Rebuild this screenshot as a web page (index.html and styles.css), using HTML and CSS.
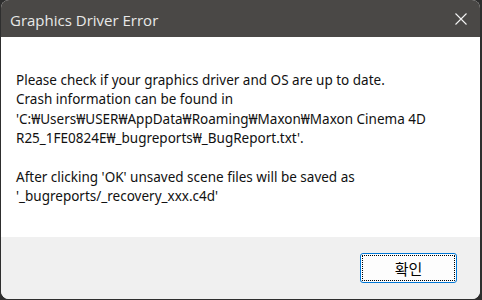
FILE: index.html
```html
<!DOCTYPE html>
<html lang="ko">
<head>
    <meta charset="UTF-8">
    <meta name="viewport" content="width=device-width, initial-scale=1.0">
    <title>Graphics Driver Error</title>
    <link rel="stylesheet" href="styles.css">
</head>
<body>
    <div class="dialog">
        <div class="title-bar">
            <span class="title">Graphics Driver Error</span>
            <button class="close-btn" aria-label="닫기">
                <svg width="12" height="12" viewBox="0 0 12 12">
                    <path d="M0.5 0.5 L11.5 11.5 M11.5 0.5 L0.5 11.5" stroke="#f2f2f2" stroke-width="1.1" fill="none"/>
                </svg>
            </button>
        </div>
        <div class="content">
            <p>Please check if your graphics driver and OS are up to date.<br>
            Crash information can be found in<br>
            'C:₩Users₩USER₩AppData₩Roaming₩Maxon₩Maxon Cinema 4D<br>
            R25_1FE0824E₩_bugreports₩_BugReport.txt'.</p>
            <p>After clicking 'OK' unsaved scene files will be saved as<br>
            '_bugreports/_recovery_xxx.c4d'</p>
        </div>
        <div class="footer">
            <button class="ok-btn"><span class="focus">확인</span></button>
        </div>
    </div>
</body>
</html>
```

FILE: styles.css
```css
* {
    margin: 0;
    padding: 0;
    box-sizing: border-box;
}

body {
    width: 482px;
    height: 300px;
    background-color: #2e2e2e;
    overflow: hidden;
    padding: 0 2px 1px 1px;
}

.dialog {
    height: 299px;
    display: flex;
    flex-direction: column;
    border-radius: 8px;
    overflow: hidden;
    background-color: #fff;
}

.title-bar {
    height: 37px;
    flex-shrink: 0;
    background-color: #4a4846;
    display: flex;
    align-items: center;
    justify-content: space-between;
    padding: 0 13px 0 9px;
}

.title {
    font-family: 'Open Sans', 'Noto Sans', sans-serif;
    font-size: 15px;
    color: #e8e8e8;
    margin-top: 2px;
}

.close-btn {
    background: none;
    border: none;
    width: 12px;
    height: 12px;
    display: flex;
    margin-top: 1px;
}

.content {
    flex: 1;
    padding: 34px 15px 0;
    font-family: 'Noto Sans', 'Noto Sans CJK KR', sans-serif;
    font-size: 13.5px;
    line-height: 19.4px;
    color: #111;
}

.content p {
    margin-bottom: 19.4px;
}

.footer {
    height: 62px;
    flex-shrink: 0;
    background-color: #f0f0f0;
    display: flex;
    justify-content: flex-end;
    align-items: flex-start;
    padding: 16px 23px 0 0;
}

.ok-btn {
    width: 97px;
    height: 30px;
    background-color: #fdfdfd;
    border: 1px solid #0078d7;
    border-radius: 3px;
    padding: 1px;
    font-family: 'Noto Sans CJK KR', sans-serif;
    font-size: 15px;
    color: #000;
}

.focus {
    display: flex;
    align-items: center;
    justify-content: center;
    width: 100%;
    height: 100%;
    border: 1px dotted #000;
    border-radius: 1px;
}
```
